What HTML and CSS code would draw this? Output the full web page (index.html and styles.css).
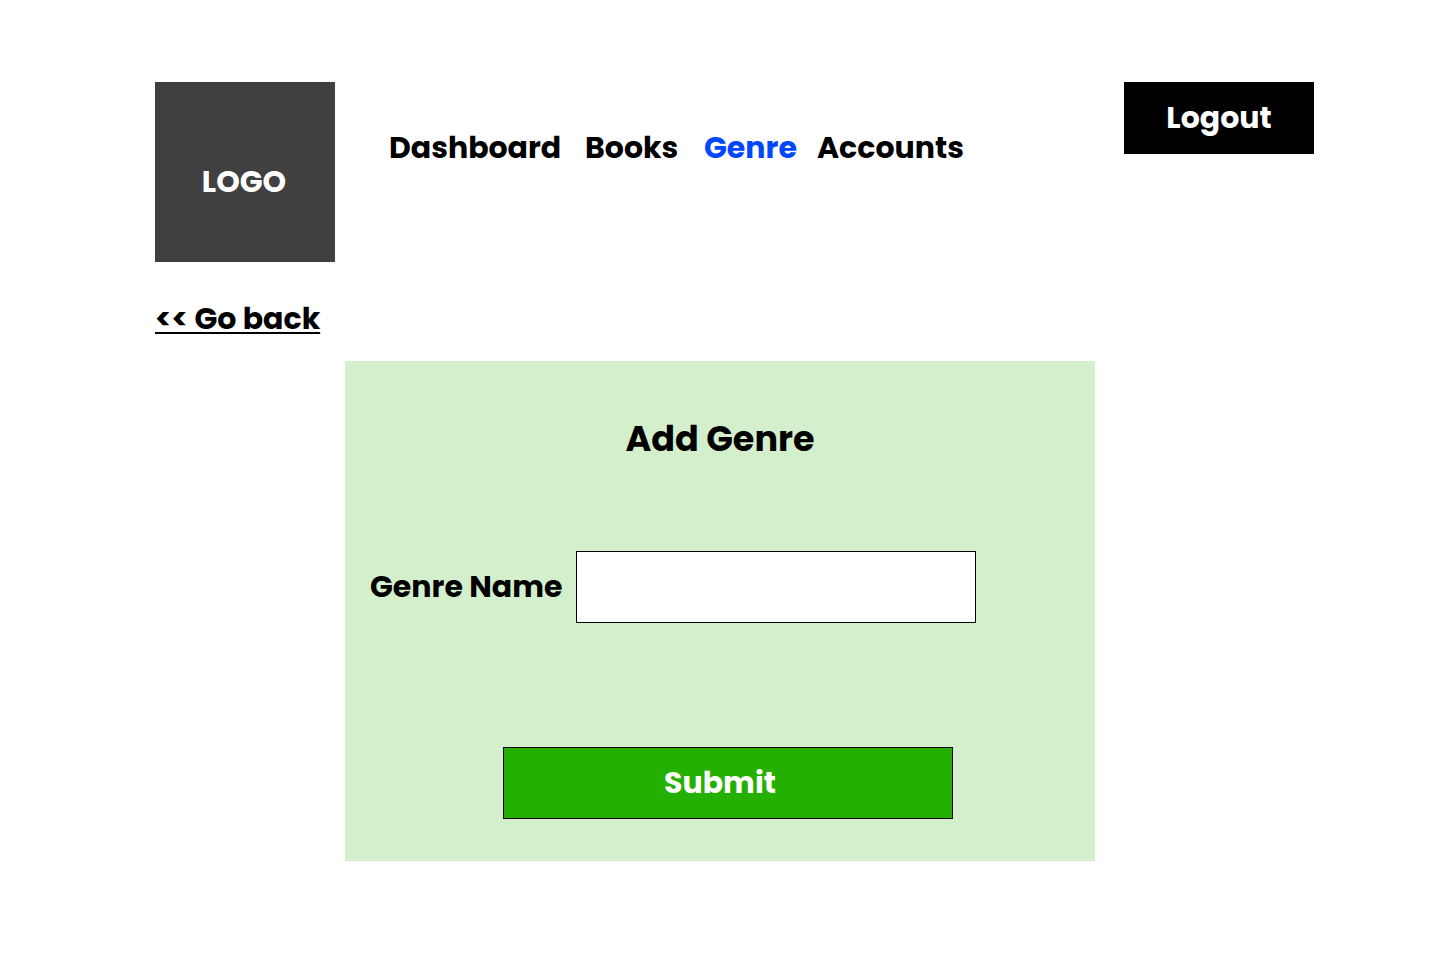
FILE: index.html
```html
<!DOCTYPE html>
<html lang="en">
<head>
<meta charset="utf-8">
<meta name="viewport" content="width=device-width, initial-scale=1">
<title>Add Genre</title>
<link rel="stylesheet" href="styles.css">
</head>
<body>
<header class="header">
  <div class="logo">LOGO</div>
  <nav class="nav" aria-label="Main">
    <a class="nav-link" href="#dashboard">Dashboard</a>
    <a class="nav-link" href="#books">Books</a>
    <a class="nav-link nav-link-active" href="#genre" aria-current="page">Genre</a>
    <a class="nav-link" href="#accounts">Accounts</a>
  </nav>
  <button class="logout" type="button">Logout</button>
</header>
<main class="main">
  <a class="back" href="#genre">&lt;&lt; Go back</a>
  <form class="card">
    <h1 class="title">Add Genre</h1>
    <div class="field">
      <label class="label" for="genre-name">Genre Name</label>
      <input class="input" id="genre-name" name="genre-name" type="text">
    </div>
    <button class="submit" type="submit">Submit</button>
  </form>
</main>
</body>
</html>
```

FILE: styles.css
```css
* {
  box-sizing: border-box;
}

body {
  margin: 0;
  padding: 82px 0 48px;
  background: #fff;
  color: #000;
  font: 700 30px/44px Poppins, Inter, "Open Sans", sans-serif;
}

.header {
  display: flex;
  align-items: flex-start;
  padding: 0 126px 0 155px;
}

.logo {
  display: flex;
  align-items: center;
  justify-content: center;
  width: 180px;
  height: 180px;
  padding: 20px 2px 0 0;
  background: #404040;
  color: #fff;
}

.nav {
  display: grid;
  grid-template-columns: 196px 119px 113px auto;
  margin: 44px auto 0 54px;
}

.nav-link {
  color: inherit;
  text-decoration: none;
}

.nav-link-active {
  color: #0047ff;
}

.logout {
  width: 190px;
  height: 72px;
  padding: 0;
  border: 0;
  background: #000;
  color: #fff;
  font: inherit;
}

.main {
  display: flex;
  flex-direction: column;
  align-items: center;
  padding-top: 35px;
}

.back {
  align-self: flex-start;
  margin-left: 155px;
  color: inherit;
  text-decoration-thickness: 2px;
  text-underline-offset: 3px;
}

.card {
  display: flex;
  flex-direction: column;
  width: 100%;
  max-width: 750px;
  margin-top: 20px;
  padding: 51px 25px 42px;
  background: #d4efcc;
}

.title {
  margin: 0;
  font-size: 35px;
  line-height: 53px;
  text-align: center;
}

.field {
  display: grid;
  grid-template-columns: 206px minmax(0, 400px);
  align-items: center;
  margin-top: 86px;
}

.input {
  width: 100%;
  height: 72px;
  padding: 0 16px;
  border: 1px solid #000;
  border-radius: 0;
  background: #fff;
  font: inherit;
}

.submit {
  width: 450px;
  height: 72px;
  margin: 124px 0 0 133px;
  padding: 0 16px 0 0;
  border: 1px solid #000;
  background: #24b000;
  color: #fff;
  font: inherit;
}
```
